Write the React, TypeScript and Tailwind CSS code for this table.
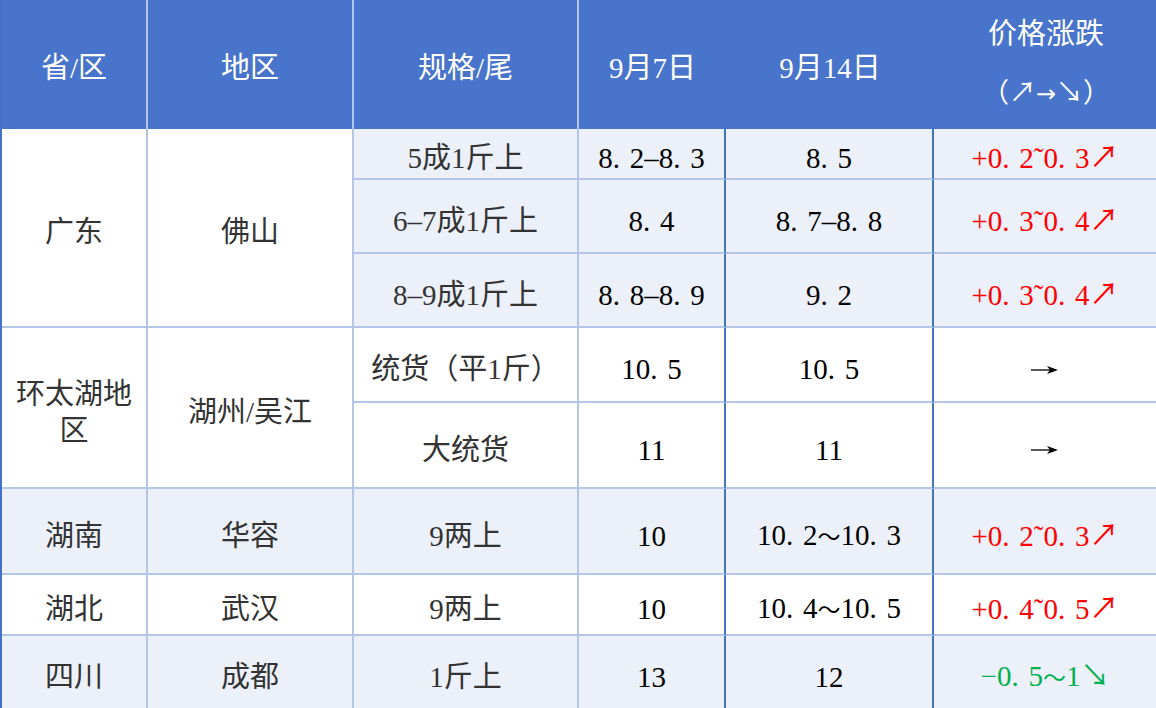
import React from "react";

const light = "border-[#B4C6E7]";

// digits sit tight, the dot takes a wide slot like in the source sheet
function Num({ v }: { v: string }) {
  const parts = v.split(".");
  return (
    <span>
      {parts.map((p, i) => (
        <React.Fragment key={i}>
          {i > 0 && <span className="inline-block w-[17px] text-left">.</span>}
          {p}
        </React.Fragment>
      ))}
    </span>
  );
}

function Flat() {
  return (
    <svg width="28" height="10" viewBox="0 0 28 10">
      <line x1="0" y1="5" x2="20" y2="5" stroke="#000" strokeWidth="1.3" />
      <path d="M16 1 L27 5 L16 9 L19 5 Z" fill="#000" />
    </svg>
  );
}

function Wave() {
  return <span className="text-[23px]">～</span>;
}

type CellProps = {
  children?: React.ReactNode;
  bg?: string;
  right?: "light" | "dark";
  span?: string;
};

function Cell({ children, bg = "bg-white", right = "light", span = "" }: CellProps) {
  return (
    <div
      className={`${bg} ${span} border-b-2 ${light} border-r-2 ${
        right === "dark" ? "border-r-[#4472C4]" : "border-r-[#B4C6E7]"
      } flex items-center justify-center text-center px-2 pt-[10px]`}
    >
      {children}
    </div>
  );
}

function Head({ children, line = true }: { children: React.ReactNode; line?: boolean }) {
  return (
    <div
      className={`bg-[#4874CB] text-white flex items-center justify-center text-center pt-[8px] ${
        line ? "border-r-2 border-r-[#B4C6E7]" : ""
      }`}
    >
      {children}
    </div>
  );
}

const up = "text-[#FF0000]";
const down = "text-[#00B050]";
const alt = "bg-[#ECF0F9]";

function Row({
  spec,
  d1,
  d2,
  chg,
  bg,
}: {
  spec: string;
  d1: React.ReactNode;
  d2: React.ReactNode;
  chg: React.ReactNode;
  bg: string;
}) {
  return (
    <>
      <Cell bg={bg}>
        <span className="text-[#333]">{spec}</span>
      </Cell>
      <Cell bg={bg} right="dark">{d1}</Cell>
      <Cell bg={bg} right="dark">{d2}</Cell>
      <Cell bg={bg} right="dark">{chg}</Cell>
    </>
  );
}

export default function App() {
  return (
    <div
      className="w-[1156px] h-[708px] overflow-hidden bg-white text-[29px] leading-[37px] text-black"
      style={{ fontFamily: '"Liberation Serif", "Noto Sans CJK SC", serif' }}
    >
      <div className="grid grid-cols-[146px_206px_225px_147px_208px_224px] grid-rows-[129px_51px_74px_74px_75px_86px_86px_61px_74px] border-l-2 border-l-[#4472C4]">
        {/* header */}
        <Head>省/区</Head>
        <Head>地区</Head>
        <Head>规格/尾</Head>
        <Head line={false}>9月7日</Head>
        <Head line={false}>9月14日</Head>
        <Head line={false}>
          <div className="flex flex-col items-center gap-[22px] pb-[8px]">
            <span>价格涨跌</span>
            <span className="text-[27px]">
              （↗<span className="font-['DejaVu_Sans'] text-[24px]">→</span>↘）
            </span>
          </div>
        </Head>

        {/* 广东 */}
        <Cell span="row-span-3">
          <span className="text-[#333]">广东</span>
        </Cell>
        <Cell span="row-span-3">
          <span className="text-[#333]">佛山</span>
        </Cell>
        <Row
          bg={alt}
          spec="5成1斤上"
          d1={<span><Num v="8.2" />–<Num v="8.3" /></span>}
          d2={<Num v="8.5" />}
          chg={<span className={up}>+<Num v="0.2" />˜<Num v="0.3" />↗</span>}
        />
        <Row
          bg={alt}
          spec="6–7成1斤上"
          d1={<Num v="8.4" />}
          d2={<span><Num v="8.7" />–<Num v="8.8" /></span>}
          chg={<span className={up}>+<Num v="0.3" />˜<Num v="0.4" />↗</span>}
        />
        <Row
          bg={alt}
          spec="8–9成1斤上"
          d1={<span><Num v="8.8" />–<Num v="8.9" /></span>}
          d2={<Num v="9.2" />}
          chg={<span className={up}>+<Num v="0.3" />˜<Num v="0.4" />↗</span>}
        />

        {/* 环太湖地区 */}
        <Cell span="row-span-2">
          <span className="text-[#333]">环太湖地区</span>
        </Cell>
        <Cell span="row-span-2">
          <span className="text-[#333]">湖州/吴江</span>
        </Cell>
        <Row bg="bg-white" spec="统货（平1斤）" d1={<Num v="10.5" />} d2={<Num v="10.5" />} chg={<Flat />} />
        <Row bg="bg-white" spec="大统货" d1="11" d2="11" chg={<Flat />} />

        {/* 湖南 */}
        <Cell bg={alt}>
          <span className="text-[#333]">湖南</span>
        </Cell>
        <Cell bg={alt}>
          <span className="text-[#333]">华容</span>
        </Cell>
        <Row
          bg={alt}
          spec="9两上"
          d1="10"
          d2={<span><Num v="10.2" /><Wave /><Num v="10.3" /></span>}
          chg={<span className={up}>+<Num v="0.2" />˜<Num v="0.3" />↗</span>}
        />

        {/* 湖北 */}
        <Cell>
          <span className="text-[#333]">湖北</span>
        </Cell>
        <Cell>
          <span className="text-[#333]">武汉</span>
        </Cell>
        <Row
          bg="bg-white"
          spec="9两上"
          d1="10"
          d2={<span><Num v="10.4" /><Wave /><Num v="10.5" /></span>}
          chg={<span className={up}>+<Num v="0.4" />˜<Num v="0.5" />↗</span>}
        />

        {/* 四川 */}
        <Cell bg={alt}>
          <span className="text-[#333]">四川</span>
        </Cell>
        <Cell bg={alt}>
          <span className="text-[#333]">成都</span>
        </Cell>
        <Row
          bg={alt}
          spec="1斤上"
          d1="13"
          d2="12"
          chg={<span className={down}>−<Num v="0.5" /><Wave />1↘</span>}
        />
      </div>
    </div>
  );
}
